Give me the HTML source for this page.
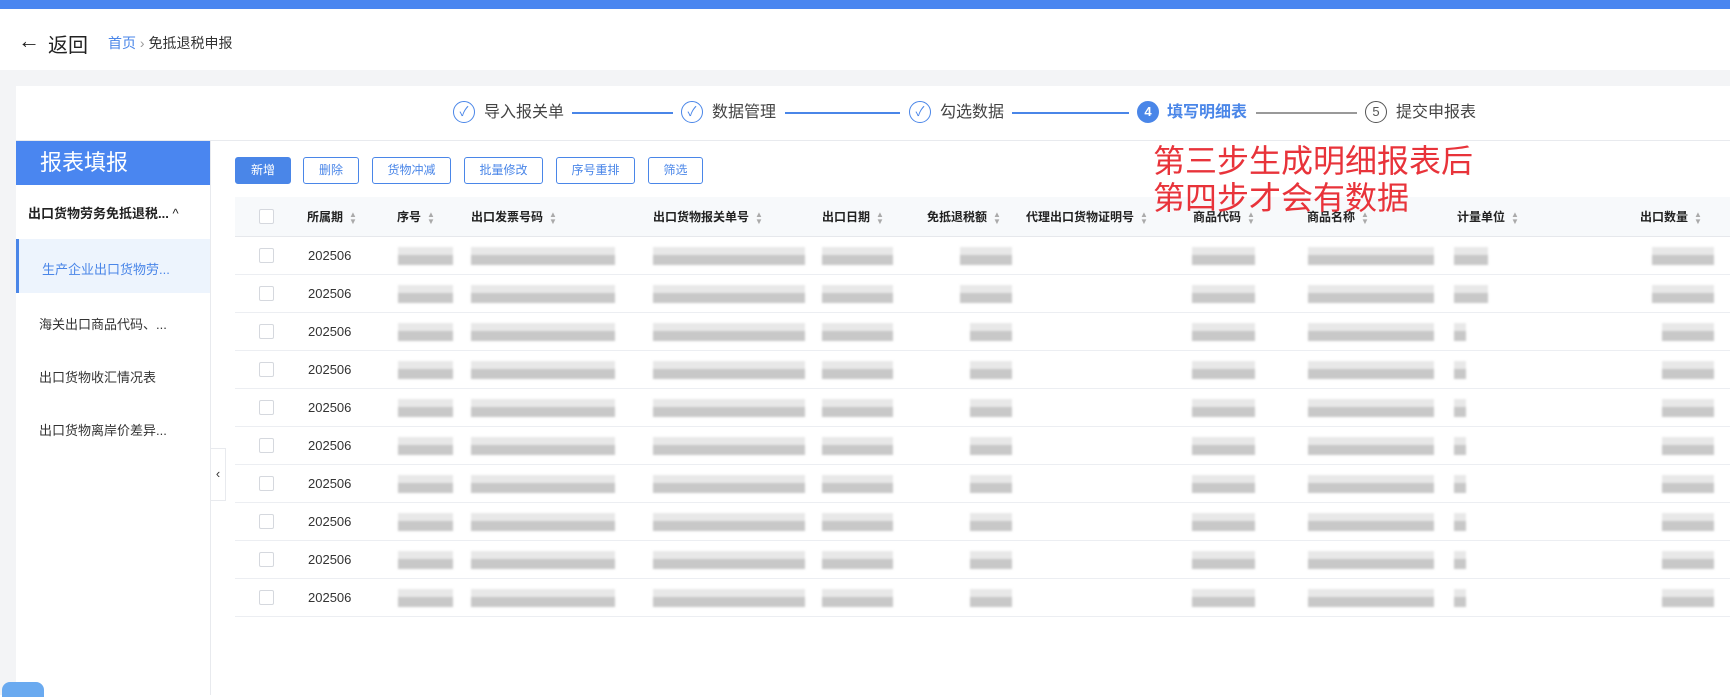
<!DOCTYPE html>
<html><head><meta charset="utf-8"><style>
*{box-sizing:border-box;margin:0;padding:0}
body{width:1730px;height:695px;overflow:hidden;background:#fff;font-family:"Liberation Sans","Noto Sans CJK SC",sans-serif;color:#333;position:relative}
.a{position:absolute;white-space:nowrap}
.step{top:102px;font-size:16px;color:#444;line-height:22px}
.ic{top:101px;width:22px;height:22px;border:1.5px solid #4a86e8;border-radius:50%;color:#4a86e8;font-size:13px;text-align:center;line-height:19px}
.ln{top:112px;height:2px;background:#4a86e8}
.btn{top:157px;height:27px;border:1px solid #4a86e8;border-radius:3px;color:#4a86e8;font-size:12px;text-align:center;line-height:25px;background:#fff}
.th{top:208px;font-size:12px;font-weight:bold;color:#222}
.so{font-size:8px;color:#aaa;line-height:7px;display:inline-block;vertical-align:middle;margin-left:6px}
.row{position:absolute;left:235px;width:1495px;height:38px;border-bottom:1px solid #eceef2}
.cb{position:absolute;left:24px;top:11px;width:15px;height:15px;border:1px solid #d5d8de;border-radius:2px;background:#fff}
.pd{position:absolute;left:73px;top:11px;font-size:13px;color:#333}
.b{position:absolute;top:10px;height:18px;background:linear-gradient(#e8e8e8 0 45%,#c8c8c8 45% 100%);filter:blur(1px)}
.si{left:16px;font-size:13px;color:#333}
</style></head><body>
<div class="a" style="left:0;top:0;width:1730px;height:9px;background:#4a86f0"></div>
<div class="a" style="left:18px;top:28px;font-size:22px;color:#222">←</div>
<div class="a" style="left:48px;top:29px;font-size:20px;color:#222">返回</div>
<div class="a" style="left:108px;top:33px;font-size:14px;color:#4a86e8">首页 <span style="color:#999">›</span> <span style="color:#333">免抵退税申报</span></div>
<div class="a" style="left:0;top:70px;width:1730px;height:625px;background:#f3f4f6"></div>
<div class="a" style="left:16px;top:86px;width:1714px;height:609px;background:#fff"></div>
<div class="a ic" style="left:453px">✓</div><div class="a step" style="left:484px">导入报关单</div>
<div class="a ln" style="left:572px;width:101px"></div>
<div class="a ic" style="left:681px">✓</div><div class="a step" style="left:712px">数据管理</div>
<div class="a ln" style="left:785px;width:115px"></div>
<div class="a ic" style="left:909px">✓</div><div class="a step" style="left:940px">勾选数据</div>
<div class="a ln" style="left:1012px;width:117px"></div>
<div class="a ic" style="left:1137px;background:#4a86e8;color:#fff;font-weight:bold">4</div><div class="a step" style="left:1167px;color:#4a86e8;font-weight:bold">填写明细表</div>
<div class="a ln" style="left:1256px;width:101px;background:#999"></div>
<div class="a ic" style="left:1365px;border-color:#555;color:#555">5</div><div class="a step" style="left:1396px">提交申报表</div>
<div class="a" style="left:16px;top:140px;width:1714px;height:1px;background:#e8eaee"></div>
<div class="a" style="left:16px;top:141px;width:194px;height:44px;background:#4a86f0;color:#fff;font-size:22px;line-height:44px;padding-left:24px">报表填报</div>
<div class="a" style="left:210px;top:141px;width:1px;height:554px;background:#e8eaee"></div>
<div class="a" style="left:211px;top:448px;width:15px;height:53px;border:1px solid #e8eaee;border-left:none;background:#fff;font-size:13px;line-height:50px;text-align:center;color:#333">‹</div>
<div class="a" style="left:28px;top:203px;font-size:13px;font-weight:bold;color:#222">出口货物劳务免抵退税... <span style="font-weight:normal">^</span></div>
<div class="a" style="left:16px;top:239px;width:194px;height:54px;background:#edf4fd;border-left:3px solid #4a86e8"></div>
<div class="a si" style="left:42px;top:259px;color:#4a86e8;font-size:13px">生产企业出口货物劳...</div>
<div class="a si" style="left:39px;top:314px">海关出口商品代码、...</div>
<div class="a si" style="left:39px;top:367px">出口货物收汇情况表</div>
<div class="a si" style="left:39px;top:420px">出口货物离岸价差异...</div>
<div class="a" style="left:2px;top:682px;width:42px;height:15px;border-radius:8px 8px 0 0;background:#6aaaf0"></div>
<div class="a btn" style="left:235px;width:56px;background:#4a86e8;color:#fff">新增</div>
<div class="a btn" style="left:303px;width:56px">删除</div>
<div class="a btn" style="left:372px;width:79px">货物冲减</div>
<div class="a btn" style="left:464px;width:79px">批量修改</div>
<div class="a btn" style="left:556px;width:79px">序号重排</div>
<div class="a btn" style="left:648px;width:55px">筛选</div>
<div class="a" style="left:235px;top:197px;width:1495px;height:40px;background:#f7f9fb;border-bottom:1px solid #e6e8ec"></div>
<div class="a" style="left:259px;top:209px;width:15px;height:15px;border:1px solid #d5d8de;border-radius:2px;background:#fff"></div>
<div class="a th" style="left:307px">所属期<span class="so">▲<br>▼</span></div>
<div class="a th" style="left:397px">序号<span class="so">▲<br>▼</span></div>
<div class="a th" style="left:471px">出口发票号码<span class="so">▲<br>▼</span></div>
<div class="a th" style="left:653px">出口货物报关单号<span class="so">▲<br>▼</span></div>
<div class="a th" style="left:822px">出口日期<span class="so">▲<br>▼</span></div>
<div class="a th" style="left:927px">免抵退税额<span class="so">▲<br>▼</span></div>
<div class="a th" style="left:1026px">代理出口货物证明号<span class="so">▲<br>▼</span></div>
<div class="a th" style="left:1193px">商品代码<span class="so">▲<br>▼</span></div>
<div class="a th" style="left:1307px">商品名称<span class="so">▲<br>▼</span></div>
<div class="a th" style="left:1457px">计量单位<span class="so">▲<br>▼</span></div>
<div class="a th" style="left:1640px">出口数量<span class="so">▲<br>▼</span></div>
<div class="row" style="top:237px"><div class="cb"></div><div class="pd">202506</div><div class="b" style="left:163px;width:55px"></div><div class="b" style="left:236px;width:144px"></div><div class="b" style="left:418px;width:152px"></div><div class="b" style="left:587px;width:71px"></div><div class="b" style="left:725px;width:52px"></div><div class="b" style="left:957px;width:63px"></div><div class="b" style="left:1073px;width:126px"></div><div class="b" style="left:1219px;width:34px"></div><div class="b" style="left:1417px;width:62px"></div></div>
<div class="row" style="top:275px"><div class="cb"></div><div class="pd">202506</div><div class="b" style="left:163px;width:55px"></div><div class="b" style="left:236px;width:144px"></div><div class="b" style="left:418px;width:152px"></div><div class="b" style="left:587px;width:71px"></div><div class="b" style="left:725px;width:52px"></div><div class="b" style="left:957px;width:63px"></div><div class="b" style="left:1073px;width:126px"></div><div class="b" style="left:1219px;width:34px"></div><div class="b" style="left:1417px;width:62px"></div></div>
<div class="row" style="top:313px"><div class="cb"></div><div class="pd">202506</div><div class="b" style="left:163px;width:55px"></div><div class="b" style="left:236px;width:144px"></div><div class="b" style="left:418px;width:152px"></div><div class="b" style="left:587px;width:71px"></div><div class="b" style="left:735px;width:42px"></div><div class="b" style="left:957px;width:63px"></div><div class="b" style="left:1073px;width:126px"></div><div class="b" style="left:1219px;width:12px"></div><div class="b" style="left:1427px;width:52px"></div></div>
<div class="row" style="top:351px"><div class="cb"></div><div class="pd">202506</div><div class="b" style="left:163px;width:55px"></div><div class="b" style="left:236px;width:144px"></div><div class="b" style="left:418px;width:152px"></div><div class="b" style="left:587px;width:71px"></div><div class="b" style="left:735px;width:42px"></div><div class="b" style="left:957px;width:63px"></div><div class="b" style="left:1073px;width:126px"></div><div class="b" style="left:1219px;width:12px"></div><div class="b" style="left:1427px;width:52px"></div></div>
<div class="row" style="top:389px"><div class="cb"></div><div class="pd">202506</div><div class="b" style="left:163px;width:55px"></div><div class="b" style="left:236px;width:144px"></div><div class="b" style="left:418px;width:152px"></div><div class="b" style="left:587px;width:71px"></div><div class="b" style="left:735px;width:42px"></div><div class="b" style="left:957px;width:63px"></div><div class="b" style="left:1073px;width:126px"></div><div class="b" style="left:1219px;width:12px"></div><div class="b" style="left:1427px;width:52px"></div></div>
<div class="row" style="top:427px"><div class="cb"></div><div class="pd">202506</div><div class="b" style="left:163px;width:55px"></div><div class="b" style="left:236px;width:144px"></div><div class="b" style="left:418px;width:152px"></div><div class="b" style="left:587px;width:71px"></div><div class="b" style="left:735px;width:42px"></div><div class="b" style="left:957px;width:63px"></div><div class="b" style="left:1073px;width:126px"></div><div class="b" style="left:1219px;width:12px"></div><div class="b" style="left:1427px;width:52px"></div></div>
<div class="row" style="top:465px"><div class="cb"></div><div class="pd">202506</div><div class="b" style="left:163px;width:55px"></div><div class="b" style="left:236px;width:144px"></div><div class="b" style="left:418px;width:152px"></div><div class="b" style="left:587px;width:71px"></div><div class="b" style="left:735px;width:42px"></div><div class="b" style="left:957px;width:63px"></div><div class="b" style="left:1073px;width:126px"></div><div class="b" style="left:1219px;width:12px"></div><div class="b" style="left:1427px;width:52px"></div></div>
<div class="row" style="top:503px"><div class="cb"></div><div class="pd">202506</div><div class="b" style="left:163px;width:55px"></div><div class="b" style="left:236px;width:144px"></div><div class="b" style="left:418px;width:152px"></div><div class="b" style="left:587px;width:71px"></div><div class="b" style="left:735px;width:42px"></div><div class="b" style="left:957px;width:63px"></div><div class="b" style="left:1073px;width:126px"></div><div class="b" style="left:1219px;width:12px"></div><div class="b" style="left:1427px;width:52px"></div></div>
<div class="row" style="top:541px"><div class="cb"></div><div class="pd">202506</div><div class="b" style="left:163px;width:55px"></div><div class="b" style="left:236px;width:144px"></div><div class="b" style="left:418px;width:152px"></div><div class="b" style="left:587px;width:71px"></div><div class="b" style="left:735px;width:42px"></div><div class="b" style="left:957px;width:63px"></div><div class="b" style="left:1073px;width:126px"></div><div class="b" style="left:1219px;width:12px"></div><div class="b" style="left:1427px;width:52px"></div></div>
<div class="row" style="top:579px"><div class="cb"></div><div class="pd">202506</div><div class="b" style="left:163px;width:55px"></div><div class="b" style="left:236px;width:144px"></div><div class="b" style="left:418px;width:152px"></div><div class="b" style="left:587px;width:71px"></div><div class="b" style="left:735px;width:42px"></div><div class="b" style="left:957px;width:63px"></div><div class="b" style="left:1073px;width:126px"></div><div class="b" style="left:1219px;width:12px"></div><div class="b" style="left:1427px;width:52px"></div></div>
<div class="a" style="left:1153px;top:143px;font-size:32px;line-height:37px;color:#e8333a">第三步生成明细报表后<br>第四步才会有数据</div>
</body></html>
